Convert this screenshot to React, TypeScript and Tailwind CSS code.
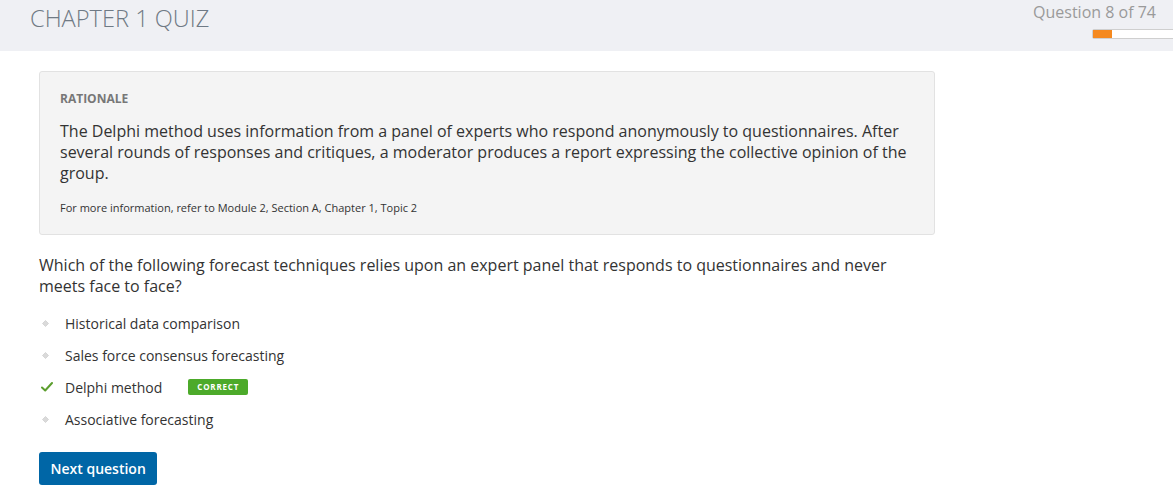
import React from 'react'

const options = [
  { label: 'Historical data comparison', correct: false },
  { label: 'Sales force consensus forecasting', correct: false },
  { label: 'Delphi method', correct: true },
  { label: 'Associative forecasting', correct: false },
]

function Bullet() {
  return (
    <svg width="7" height="7" viewBox="0 0 7 7" className="block">
      <path d="M3.5 0.5 L6.5 3.5 L3.5 6.5 L0.5 3.5 Z" fill="#dadada" stroke="#c8c8c8" strokeWidth="0.6" />
    </svg>
  )
}

function Check() {
  return (
    <svg width="12" height="10" viewBox="0 0 12 10" className="block">
      <path d="M1 5.5 L4.2 8.5 L11 1" fill="none" stroke="#5c9e2e" strokeWidth="2" strokeLinecap="round" strokeLinejoin="round" />
    </svg>
  )
}

export default function App() {
  return (
    <div className="min-h-screen bg-white text-[#333]" style={{ fontFamily: '"Open Sans", "Liberation Sans", sans-serif' }}>
      {/* Header */}
      <div className="h-[51px] bg-[#eff0f4] flex justify-between overflow-hidden">
        <h1 className="pl-[30px] pt-[3px] text-[23.6px] font-light leading-[30px] text-[#6f7a85]">
          CHAPTER 1 QUIZ
        </h1>
        <div className="pr-[17px] pt-[1px] shrink-0">
          <div className="text-[16px] leading-[22px] text-[#9a9a9a]">Question 8 of 74</div>
          <div className="ml-[59px] mt-[6px] w-[140px] h-[10px] bg-white border border-[#cfcfcf] rounded-[2px] -mr-[100px]">
            <div className="h-full w-[19px] bg-[#f5891f]" />
          </div>
        </div>
      </div>

      <div className="pl-[39px] pt-[20px]">
        {/* Rationale */}
        <div className="w-[896px] bg-[#f4f4f4] border border-[#e2e2e2] rounded-[3px] px-[20px] pt-[19px] pb-[18px]">
          <div className="text-[12px] font-bold text-[#777] leading-[16px]">RATIONALE</div>
          <p className="mt-[14px] text-[16px] leading-[21px] text-[#333]">
            The Delphi method uses information from a panel of experts who respond anonymously to questionnaires. After several rounds of responses and critiques, a moderator produces a report expressing the collective opinion of the group.
          </p>
          <p className="mt-[16px] text-[11px] leading-[16px] text-[#333]">
            For more information, refer to Module 2, Section A, Chapter 1, Topic 2
          </p>
        </div>

        {/* Question */}
        <p className="mt-[20px] w-[870px] text-[16px] leading-[21px] text-[#333]">
          Which of the following forecast techniques relies upon an expert panel that responds to questionnaires and never meets face to face?
        </p>

        <ul className="mt-[10px]">
          {options.map((o) => (
            <li key={o.label} className="h-[32px] flex items-center">
              <span className="w-[26px] flex justify-start pl-[2px]">
                {o.correct ? <Check /> : <span className="pl-[1px]"><Bullet /></span>}
              </span>
              <span className="text-[14px] text-[#333]">{o.label}</span>
              {o.correct && (
                <span className="ml-[26px] h-[16px] px-[9px] bg-[#4caa2a] rounded-[2px] text-white text-[8px] font-bold tracking-[0.8px] leading-[16px]">
                  CORRECT
                </span>
              )}
            </li>
          ))}
        </ul>

        <button className="mt-[17px] h-[33px] px-[11.5px] bg-[#0066a6] rounded-[3px] text-white text-[14px] font-semibold">
          Next question
        </button>
      </div>
    </div>
  )
}
